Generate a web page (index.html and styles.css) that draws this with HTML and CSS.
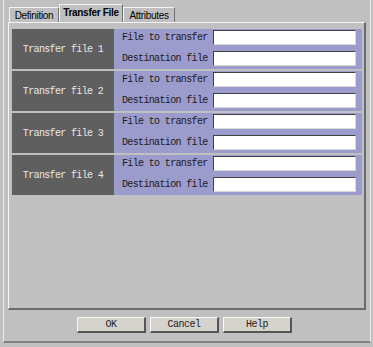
FILE: index.html
```html
<!DOCTYPE html>
<html lang="en">
<head>
  <meta charset="UTF-8">
  <title>Transfer File</title>
  <link rel="stylesheet" href="styles.css">
</head>
<body>
  <div class="window">
    <div class="tabs">
      <div class="tab def">Definition</div>
      <div class="tab active">Transfer File</div>
      <div class="tab attr">Attributes</div>
    </div>

    <div class="panel">
      <div class="group">
        <div class="name">Transfer file 1</div>
        <div class="fields">
          <div class="field"><label>File to transfer</label><input type="text"></div>
          <div class="field"><label>Destination file</label><input type="text"></div>
        </div>
      </div>
      <div class="group">
        <div class="name">Transfer file 2</div>
        <div class="fields">
          <div class="field"><label>File to transfer</label><input type="text"></div>
          <div class="field"><label>Destination file</label><input type="text"></div>
        </div>
      </div>
      <div class="group">
        <div class="name">Transfer file 3</div>
        <div class="fields">
          <div class="field"><label>File to transfer</label><input type="text"></div>
          <div class="field"><label>Destination file</label><input type="text"></div>
        </div>
      </div>
      <div class="group">
        <div class="name">Transfer file 4</div>
        <div class="fields">
          <div class="field"><label>File to transfer</label><input type="text"></div>
          <div class="field"><label>Destination file</label><input type="text"></div>
        </div>
      </div>
    </div>

    <div class="buttons">
      <button>OK</button>
      <button>Cancel</button>
      <button>Help</button>
    </div>
  </div>
</body>
</html>
```

FILE: styles.css
```css
html, body {
  margin: 0;
  background: #c0c0c0;
}
body {
  width: 373px;
  height: 347px;
  overflow: hidden;
}
.window {
  box-sizing: border-box;
  height: 343px;
  margin: 0 2px 0 3px;
  border-left: 1px solid #ececec;
  border-right: 1px solid #ececec;
  border-bottom: 2px solid #808080;
  background: #c0c0c0;
}
.tabs {
  display: flex;
  align-items: flex-end;
  height: 22px;
  padding-left: 5px;
  font-family: "Liberation Sans", Arial, sans-serif;
  font-size: 10px;
  letter-spacing: -0.3px;
  color: #000;
}
.tab {
  box-sizing: border-box;
  height: 15px;
  padding-top: 2px;
  border-top: 1px solid #f4f4f4;
  border-left: 1px solid #f4f4f4;
  border-right: 1px solid #707070;
  line-height: 12px;
  text-align: center;
}
.tab.def {
  width: 50px;
}
.tab.attr {
  width: 52px;
}
.tab.active {
  width: 64px;
  height: 18px;
  padding-top: 2px;
  font-weight: bold;
  background: #c0c0c0;
}
.panel {
  box-sizing: border-box;
  width: 358px;
  height: 288px;
  margin-left: 4px;
  padding: 6px 0 0 3px;
  border-top: 1px solid #f4f4f4;
  border-left: 1px solid #f4f4f4;
  border-right: 2px solid #6a6a6a;
  border-bottom: 2px solid #6a6a6a;
}
.group {
  display: flex;
  width: 350px;
  height: 40px;
  margin-bottom: 2px;
  font-family: "Liberation Mono", "Courier New", monospace;
  font-size: 10px;
  letter-spacing: -0.65px;
}
.name {
  width: 102px;
  display: flex;
  align-items: center;
  justify-content: center;
  background: #5f5f5f;
  color: #e8e8e8;
}
.fields {
  flex: 1;
  display: flex;
  flex-direction: column;
  gap: 6px;
  padding: 1px 6px 0 8px;
  background: #9c9ccc;
}
.field {
  display: flex;
  align-items: center;
  height: 15px;
}
.field label {
  width: 91px;
  color: #1a1a1a;
}
.field input {
  box-sizing: border-box;
  width: 143px;
  height: 15px;
  margin: 0;
  padding: 0;
  background: #fff;
  border-top: 1px solid #404040;
  border-left: 1px solid #404040;
  border-right: 1px solid #d8d8d8;
  border-bottom: 1px solid #d8d8d8;
}
.buttons {
  display: flex;
  gap: 4px;
  margin: 7px 0 0 73px;
}
button {
  box-sizing: border-box;
  width: 69px;
  height: 16px;
  padding: 0;
  background: #d6d3cc;
  border-top: 1px solid #f8f8f8;
  border-left: 1px solid #f8f8f8;
  border-right: 2px solid #555;
  border-bottom: 2px solid #555;
  font-family: "Liberation Mono", "Courier New", monospace;
  font-size: 10px;
  letter-spacing: -0.5px;
  color: #222;
}
```
